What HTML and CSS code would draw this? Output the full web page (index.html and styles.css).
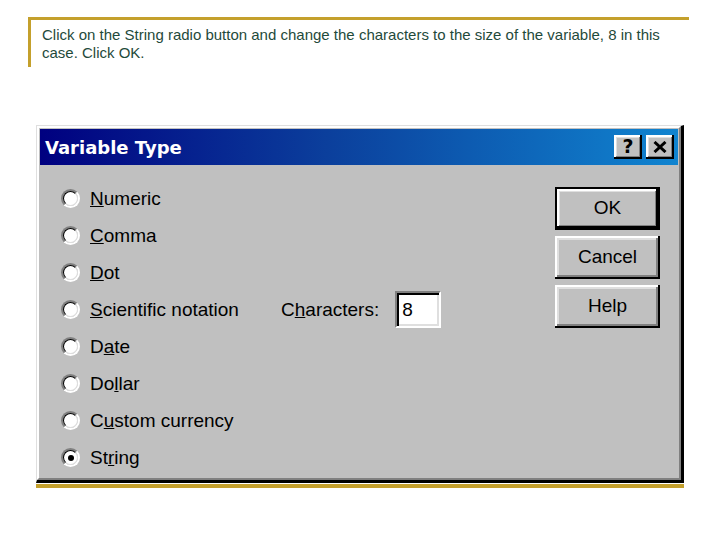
FILE: index.html
```html
<!DOCTYPE html>
<html>
<head>
<meta charset="utf-8">
<link rel="stylesheet" href="styles.css">
</head>
<body>
<div class="note">
  <p>Click on the String radio button and change the characters to the size of the variable, 8 in this case. Click OK.</p>
</div>
<div class="window-wrap">
  <div class="dialog">
    <div class="frame">
      <div class="titlebar">
        <span class="title">Variable Type</span>
        <div class="tbtns">
          <span class="tbtn help">?</span>
          <span class="tbtn close"><svg width="14" height="12" viewBox="0 0 14 12"><path d="M1.5 1 L12.5 11 M12.5 1 L1.5 11" stroke="#000" stroke-width="3" fill="none"/></svg></span>
        </div>
      </div>
      <div class="body">
        <div class="options">
          <div class="row"><span class="radio"><span class="ring"></span></span><span class="label"><u>N</u>umeric</span></div>
          <div class="row"><span class="radio"><span class="ring"></span></span><span class="label"><u>C</u>omma</span></div>
          <div class="row"><span class="radio"><span class="ring"></span></span><span class="label"><u>D</u>ot</span></div>
          <div class="row"><span class="radio"><span class="ring"></span></span><span class="label"><u>S</u>cientific notation</span></div>
          <div class="row"><span class="radio"><span class="ring"></span></span><span class="label">D<u>a</u>te</span></div>
          <div class="row"><span class="radio"><span class="ring"></span></span><span class="label">Do<u>l</u>lar</span></div>
          <div class="row"><span class="radio"><span class="ring"></span></span><span class="label">C<u>u</u>stom currency</span></div>
          <div class="row"><span class="radio"><span class="ring"><span class="dot"></span></span></span><span class="label">St<u>r</u>ing</span></div>
        </div>
        <div class="width-field">
          <span class="label">C<u>h</u>aracters:</span>
          <span class="field">8</span>
        </div>
        <div class="buttons">
          <div class="btn default"><span class="btn-inner">OK</span></div>
          <div class="btn"><span class="btn-inner">Cancel</span></div>
          <div class="btn"><span class="btn-inner">Help</span></div>
        </div>
      </div>
    </div>
  </div>
  <div class="goldline"></div>
</div>
</body>
</html>
```
FILE: styles.css
```css
html, body {
  margin: 0;
  padding: 0;
  background: #ffffff;
}

body {
  font-family: "Liberation Sans", Arial, sans-serif;
}

.note {
  margin: 17px 0 0 28px;
  width: 647px;
  height: 41px;
  border-top: 3px solid #c4a02c;
  border-left: 3px solid #c4a02c;
  padding: 6px 0 0 11px;
  box-sizing: content-box;
}

.note p {
  margin: 0;
  font-size: 15px;
  line-height: 18px;
  color: #1f4a3b;
  width: 636px;
}

.window-wrap {
  margin: 58px 0 0 36px;
  width: 648px;
}

.dialog {
  border-top: 1px solid #dfdfdf;
  border-left: 1px solid #dfdfdf;
  border-right: 3px solid #000;
  border-bottom: 3px solid #000;
}

.frame {
  border-top: 2px solid #fff;
  border-left: 2px solid #fff;
  border-right: 2px solid #808080;
  border-bottom: 2px solid #808080;
  padding: 1px;
  background: #c0c0c0;
}

.titlebar {
  height: 36px;
  background: linear-gradient(to right, #000080 0%, #0b3f9c 45%, #1084d0 100%);
  display: flex;
  align-items: center;
  justify-content: space-between;
  padding: 0 4px 0 5px;
}

.title {
  font-family: "DejaVu Sans", sans-serif;
  font-weight: bold;
  font-size: 18px;
  color: #fff;
}

.tbtns {
  display: flex;
  gap: 4px;
  align-items: center;
}

.tbtn {
  width: 28px;
  height: 24px;
  box-sizing: border-box;
  background: #c0c0c0;
  box-shadow: inset -2px -2px #000, inset 2px 2px #fff, inset -3px -3px #808080, inset 3px 3px #dfdfdf;
  display: flex;
  align-items: center;
  justify-content: center;
  color: #000;
}

.help {
  font-family: "DejaVu Sans", sans-serif;
  font-weight: bold;
  font-size: 19px;
  line-height: 1;
  padding-bottom: 1px;
}

.body {
  display: flex;
  height: 312px;
  font-size: 19px;
  color: #000;
}

.options {
  width: 241px;
  box-sizing: border-box;
  padding: 15px 0 0 21px;
}

.row {
  height: 37px;
  display: flex;
  align-items: center;
}

.radio {
  width: 19px;
  height: 19px;
  box-sizing: border-box;
  border-radius: 50%;
  border: 2px solid;
  border-color: #808080 #fff #fff #808080;
  margin-right: 10px;
  display: flex;
}

.ring {
  flex: 1;
  border-radius: 50%;
  border: 1.5px solid;
  border-color: #000 #dfdfdf #dfdfdf #000;
  background: #fff;
  display: flex;
  align-items: center;
  justify-content: center;
}

.dot {
  width: 6px;
  height: 6px;
  border-radius: 50%;
  background: #000;
}

.label {
  white-space: nowrap;
  line-height: 22px;
}

.width-field {
  padding-top: 126px;
  display: flex;
  align-items: center;
  height: 37px;
}

.width-field .label {
  margin-right: 16px;
}

.field {
  width: 46px;
  height: 37px;
  box-sizing: border-box;
  background: #fff;
  border: 2px solid;
  border-color: #808080 #fff #fff #808080;
  box-shadow: inset 2px 2px #000, inset -2px -2px #dfdfdf;
  padding: 4px 0 0 5px;
  line-height: 26px;
}

.buttons {
  margin-left: auto;
  padding: 22px 18px 0 0;
  display: flex;
  flex-direction: column;
  gap: 6px;
}

.btn {
  width: 105px;
  height: 43px;
  box-sizing: border-box;
  background: #c0c0c0;
  box-shadow: inset -2px -2px #000, inset 2px 2px #fff, inset -4px -4px #808080, inset 4px 4px #dfdfdf;
  display: flex;
}

.btn.default {
  border: 2px solid #000;
  box-shadow: inset -2px -2px #000, inset 2px 2px #fff, inset -3px -3px #808080, inset 3px 3px #dfdfdf;
}

.btn-inner {
  flex: 1;
  display: flex;
  align-items: center;
  justify-content: center;
  padding-bottom: 2px;
}

.goldline {
  margin-top: 1px;
  height: 4px;
  background: #c4a02c;
}
```
